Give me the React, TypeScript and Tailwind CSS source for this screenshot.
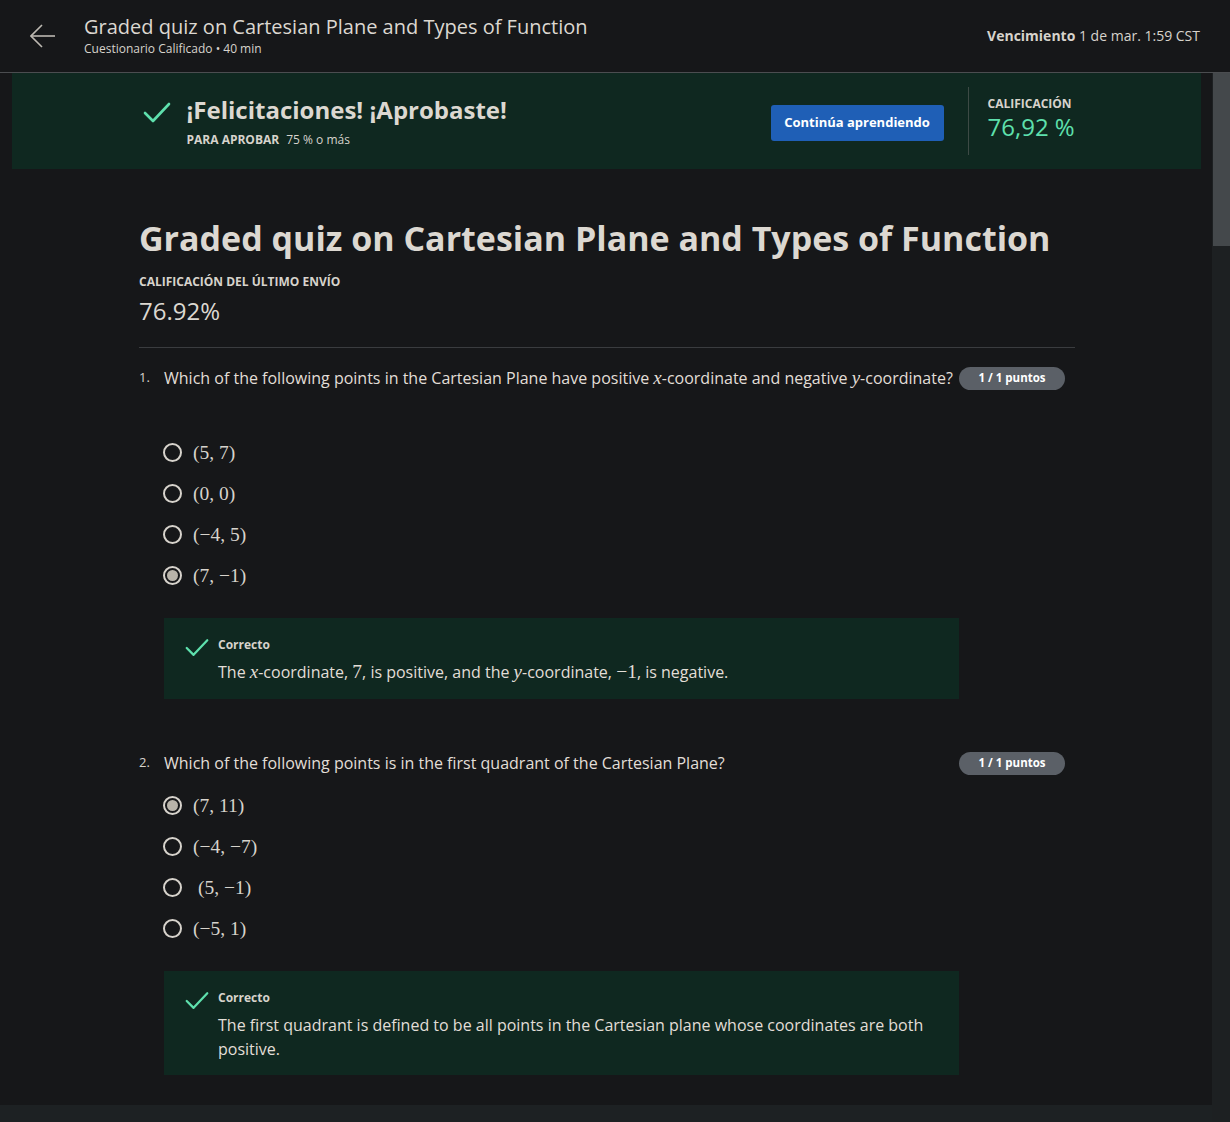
import React from "react";

const font = { fontFamily: '"Open Sans", "Noto Sans", sans-serif' };

function Check({ size = 28 }: { size?: number }) {
  return (
    <svg width={size} height={size} viewBox="0 0 28 28" fill="none">
      <polyline points="2,14 10,22 26,5" stroke="#5ee0ad" strokeWidth="2.6" strokeLinecap="round" strokeLinejoin="round" />
    </svg>
  );
}

function Radio({ checked }: { checked?: boolean }) {
  return (
    <span className="w-[19px] h-[19px] rounded-full border-2 border-[#d7d3cc] flex items-center justify-center shrink-0">
      {checked && <span className="w-[11px] h-[11px] rounded-full bg-[#b9b4aa]" />}
    </span>
  );
}

// math in KaTeX-like serif
function M({ children }: { children: React.ReactNode }) {
  return <span className="font-['Liberation_Serif',serif] text-[19.5px]">{children}</span>;
}

function V({ children }: { children: React.ReactNode }) {
  return <span className="font-['Liberation_Serif',serif] italic text-[19px]">{children}</span>;
}

function Option({ label, checked, indent }: { label: string; checked?: boolean; indent?: boolean }) {
  return (
    <div className="flex items-center h-[41px] pl-[24px] gap-[11px]">
      <Radio checked={checked} />
      <span className={indent ? "ml-[5px]" : ""}>
        <M>{label}</M>
      </span>
    </div>
  );
}

function Badge() {
  return (
    <span className="shrink-0 w-[106px] h-[23px] rounded-full bg-[#5b6067] text-white text-[11.5px] font-bold flex items-center justify-center">
      1 / 1 puntos
    </span>
  );
}

function Feedback({ children, pb }: { children: React.ReactNode; pb: string }) {
  return (
    <div className={`ml-[25px] w-[795px] bg-[#0f2820] pt-[18px] pr-[20px] flex ${pb}`}>
      <div className="w-[54px] pl-[21px] shrink-0">
        <Check size={24} />
      </div>
      <div className="flex-1">
        <div className="text-[12px] leading-[18px] font-bold text-[#d7d3cc]">Correcto</div>
        <div className="mt-[6px] text-[16px] leading-[24px] text-[#e2ded7]">{children}</div>
      </div>
    </div>
  );
}

export default function App() {
  return (
    <div className="w-[1230px] h-[1122px] overflow-hidden bg-[#161719] text-[#d7d3cc] flex flex-col" style={font}>
      {/* Header */}
      <header className="h-[73px] shrink-0 border-b border-[#4b4d50] flex items-center pl-[30px] pr-[30px]">
        <svg width="26" height="26" viewBox="0 0 26 26" fill="none" className="shrink-0">
          <line x1="1" y1="13" x2="25" y2="13" stroke="#bdb9b2" strokeWidth="1.6" />
          <polyline points="12,2 1,13 12,24" stroke="#bdb9b2" strokeWidth="1.6" fill="none" />
        </svg>
        <div className="ml-[28px] flex-1 -mt-[3px]">
          <div className="text-[20px] leading-[28px] text-[#dcd8d1]">Graded quiz on Cartesian Plane and Types of Function</div>
          <div className="text-[12px] leading-[16px] text-[#d7d3cc]">Cuestionario Calificado • 40 min</div>
        </div>
        <div className="text-[14px] text-[#d7d3cc] -mt-[2px]">
          <span className="font-bold">Vencimiento</span> 1 de mar. 1:59 CST
        </div>
      </header>

      <div className="flex flex-1 min-h-0">
        <main className="flex-1 flex flex-col min-h-0">
          {/* Banner */}
          <div className="ml-[12px] mr-[11px] h-[96px] shrink-0 bg-[#0f2820] pt-[14px]">
            <div className="w-[936px] mx-auto flex items-start">
              <div className="flex-1 flex">
                <div className="pl-[4px] mt-[12px] w-[48px] shrink-0">
                  <Check size={28} />
                </div>
                <div className="mt-[7px]">
                  <div className="text-[24px] leading-[32px] font-bold text-[#dcd8d1]">¡Felicitaciones! ¡Aprobaste!</div>
                  <div className="text-[12px] leading-[18px] mt-[5px]">
                    <span className="font-bold">PARA APROBAR</span>
                    <span className="ml-[7px]">75 % o más</span>
                  </div>
                </div>
              </div>
              <button className="mt-[18px] w-[173px] h-[36px] rounded-[3px] bg-[#1f5fb6] text-white text-[13px] font-bold">
                Continúa aprendiendo
              </button>
              <div className="ml-[24px] w-px h-[68px] bg-[#3d4a45]" />
              <div className="ml-[19px] w-[87px] mt-[8px] whitespace-nowrap">
                <div className="text-[12px] leading-[18px] font-bold text-[#d7d3cc]">CALIFICACIÓN</div>
                <div className="text-[24px] leading-[28px] text-[#5ee0ad]">76,92 %</div>
              </div>
            </div>
          </div>

          {/* Content */}
          <div className="w-[936px] ml-[139px]">
            <h1 className="mt-[47px] text-[34px] leading-[44px] font-bold text-[#dcd8d1] whitespace-nowrap">
              Graded quiz on Cartesian Plane and Types of Function
            </h1>
            <div className="mt-[14px] text-[12px] leading-[16px] font-bold">CALIFICACIÓN DEL ÚLTIMO ENVÍO</div>
            <div className="mt-[6px] text-[24px] leading-[30px] text-[#dcd8d1]">76.92%</div>
            <div className="mt-[21px] border-t border-[#3a3c3f]" />

            {/* Question 1 */}
            <div className="mt-[18px] flex items-center pr-[10px]">
              <span className="w-[25px] text-[13px] shrink-0">1.</span>
              <span className="flex-1 text-[16px] leading-[24px] text-[#e2ded7] whitespace-nowrap">
                Which of the following points in the Cartesian Plane have positive <V>x</V>-coordinate and negative <V>y</V>-coordinate?
              </span>
              <Badge />
            </div>
            <div className="mt-[42px]">
              <Option label="(5, 7)" />
              <Option label="(0, 0)" />
              <Option label="(−4, 5)" />
              <Option label="(7, −1)" checked />
            </div>
            <div className="mt-[22px]">
              <Feedback pb="pb-[15px]">
                The <V>x</V>-coordinate, <M>7</M>, is positive, and the <V>y</V>-coordinate, <M>−1</M>, is negative.
              </Feedback>
            </div>

            {/* Question 2 */}
            <div className="mt-[52px] flex items-center pr-[10px]">
              <span className="w-[25px] text-[13px] shrink-0">2.</span>
              <span className="flex-1 text-[16px] leading-[24px] text-[#e2ded7]">
                Which of the following points is in the first quadrant of the Cartesian Plane?
              </span>
              <Badge />
            </div>
            <div className="mt-[10px]">
              <Option label="(7, 11)" checked />
              <Option label="(−4, −7)" />
              <Option label="(5, −1)" indent />
              <Option label="(−5, 1)" />
            </div>
            <div className="mt-[22px]">
              <Feedback pb="pb-[14px]">
                The first quadrant is defined to be all points in the Cartesian plane whose coordinates are both positive.
              </Feedback>
            </div>
          </div>

          <div className="mt-[30px] h-[60px] shrink-0 bg-[#1d2123]" />
        </main>

        {/* Scrollbar */}
        <div className="w-[18px] shrink-0 bg-[#1d2022] flex flex-col">
          <div className="ml-[1px] h-[173px] bg-[#44484b]" />
        </div>
      </div>
    </div>
  );
}
